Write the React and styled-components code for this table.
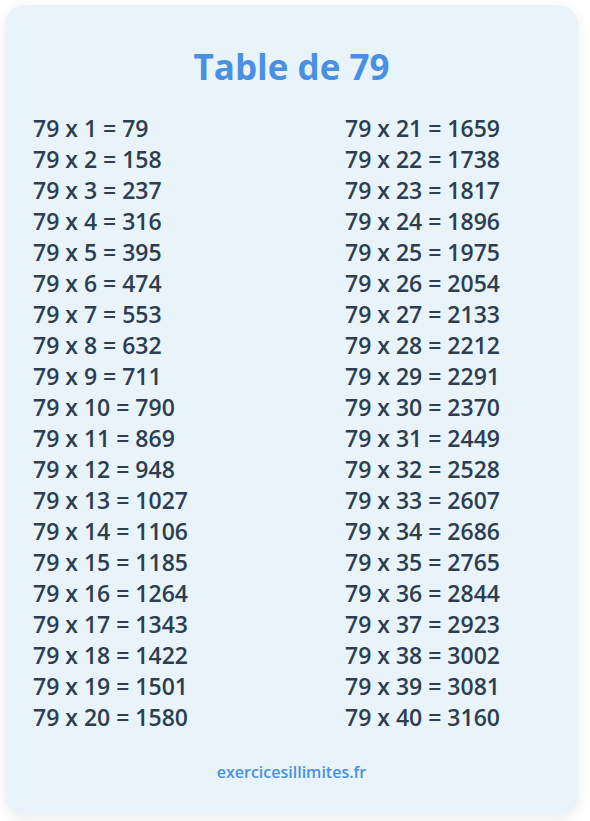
import React from 'react';
import styled, { createGlobalStyle } from 'styled-components';

const GlobalStyle = createGlobalStyle`
  html, body {
    margin: 0;
    padding: 0;
    background: #ffffff;
  }
  body {
    font-family: "Open Sans", "Noto Sans", sans-serif;
  }
`;

const Page = styled.div`
  padding: 5px 12px 6px 5px;
`;

const Card = styled.div`
  width: 573px;
  height: 810px;
  box-sizing: border-box;
  background: #e8f4f9;
  border-radius: 20px;
  box-shadow: 0 4px 14px rgba(0, 0, 0, 0.08);
  padding: 38px 28px 0;
  display: flex;
  flex-direction: column;
`;

const Title = styled.h1`
  margin: 0 0 22px;
  text-align: center;
  font-size: 35px;
  font-weight: 700;
  line-height: 48px;
  color: #4a90e2;
`;

const Columns = styled.div`
  display: grid;
  grid-template-columns: 312px 1fr;
`;

const Column = styled.div`
  display: flex;
  flex-direction: column;
`;

const Row = styled.div`
  font-size: 23px;
  font-weight: 600;
  line-height: 31px;
  color: #2c3e50;
  white-space: nowrap;
`;

const Footer = styled.div`
  margin-top: 28px;
  text-align: center;
  font-size: 16px;
  font-weight: 600;
  color: #4a90e2;
`;

const n = 79;
const left = Array.from({ length: 20 }, (_, i) => i + 1);
const right = Array.from({ length: 20 }, (_, i) => i + 21);

export default function App() {
  return (
    <>
      <GlobalStyle />
      <Page>
        <Card>
          <Title>Table de {n}</Title>
          <Columns>
            <Column>
              {left.map((k) => (
                <Row key={k}>{n} x {k} = {n * k}</Row>
              ))}
            </Column>
            <Column>
              {right.map((k) => (
                <Row key={k}>{n} x {k} = {n * k}</Row>
              ))}
            </Column>
          </Columns>
          <Footer>exercicesillimites.fr</Footer>
        </Card>
      </Page>
    </>
  );
}
